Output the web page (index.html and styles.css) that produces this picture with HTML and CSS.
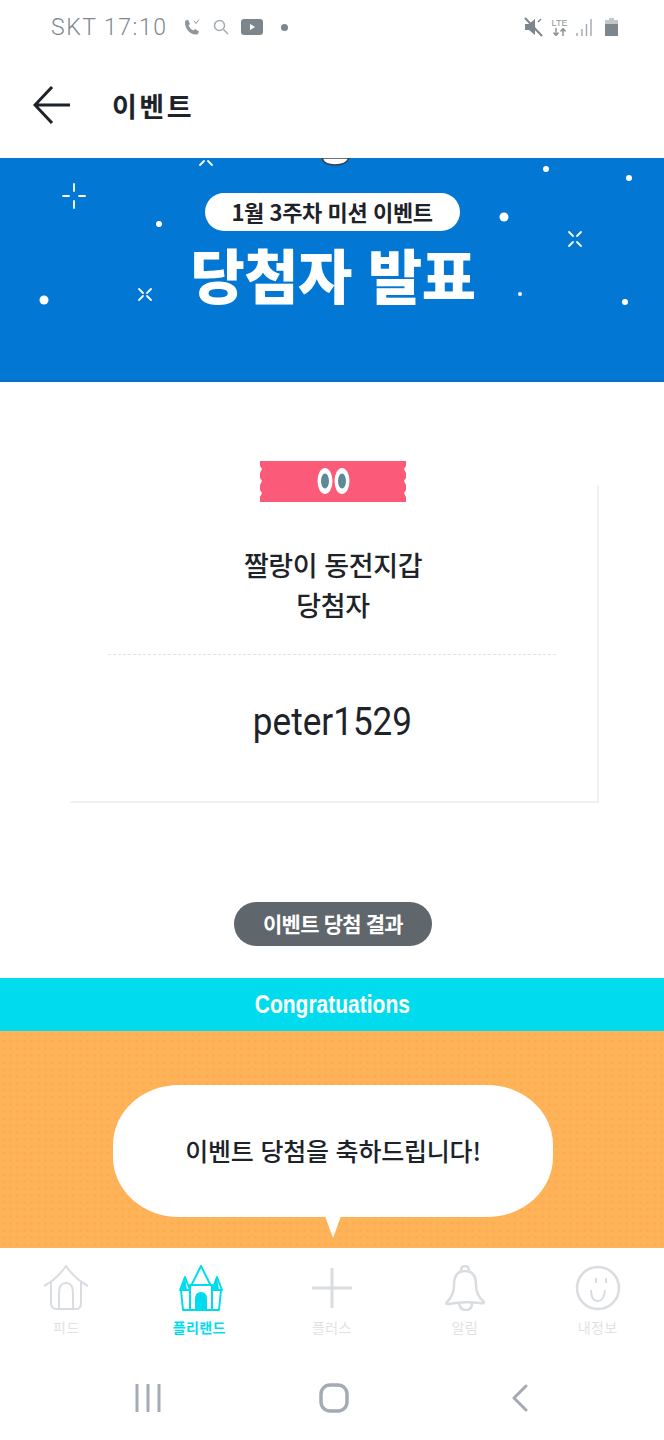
FILE: index.html
```html
<!DOCTYPE html>
<html lang="ko">
<head>
    <meta charset="UTF-8">
    <meta name="viewport" content="width=device-width, initial-scale=1.0">
    <title>이벤트</title>
    <link rel="stylesheet" href="styles.css">
</head>
<body>

    <!-- Status bar -->
    <div class="status-bar">
        <div class="status-left">
            <span class="status-text">SKT 17:10</span>
            <svg class="ic-phone" width="17" height="18" viewBox="0 0 17 18"><path d="M2 3 L5 1.500 L7 6 L5.500 7.500 Q7 11 10.500 12.500 L12 11 L16 13.500 L14.500 16.500 Q7 17 3.500 10.500 Q1.500 6.500 2 3Z" fill="#8d969c"/><path d="M11 3 L13 5.500 L16 1.500" fill="none" stroke="#8d969c" stroke-width="1"/></svg>
            <svg class="ic-search" width="16" height="16" viewBox="0 0 16 16"><circle cx="6.500" cy="6.500" r="5" fill="none" stroke="#a5acb1" stroke-width="1.500"/><path d="M10.500 10.500 L15 15" stroke="#a5acb1" stroke-width="1.500"/></svg>
            <svg class="ic-video" width="22" height="16" viewBox="0 0 22 16"><rect width="22" height="16" rx="3" fill="#7d868d"/><path d="M9 5 L14 8 L9 11Z" fill="#fff"/></svg>
            <span class="status-dot"></span>
        </div>
        <div class="status-right">
            <svg width="19" height="20" viewBox="0 0 19 20"><path d="M1 7 H5 L11 2 V18 L5 13 H1Z" fill="#7d868d"/><path d="M1 1 L18 19" stroke="#7d868d" stroke-width="2"/><path d="M14 5 L17 2" stroke="#7d868d" stroke-width="1.500"/></svg>
            <div class="lte">
                <span>LTE</span>
                <svg width="16" height="8" viewBox="0 0 16 8"><path d="M4 0 V7 M1.500 4.500 L4 7.500 L6.500 4.500 M11 8 V1 M8.500 3.500 L11 .5 L13.500 3.500" fill="none" stroke="#8d969c" stroke-width="1.500"/></svg>
            </div>
            <svg class="ic-signal" width="16" height="18" viewBox="0 0 16 18"><path d="M1 15 V18 M6 11 V18 M10.500 6 V18 M15 1 V18" stroke="#a5acb1" stroke-width="1.500"/></svg>
            <svg class="ic-battery" width="13" height="18" viewBox="0 0 13 18"><rect x="4" width="5" height="2" fill="#c2c7cb"/><rect y="2" width="13" height="5" fill="#c2c7cb"/><rect y="6" width="13" height="12" fill="#7d868d"/></svg>
        </div>
    </div>

    <!-- App bar -->
    <header class="app-bar">
        <svg width="38" height="38" viewBox="0 0 38 38"><path d="M37 19 H2 M19 1 L2 19 L19 37" fill="none" stroke="#1d2328" stroke-width="3"/></svg>
        <h1 class="app-title">이벤트</h1>
    </header>

    <!-- Banner -->
    <section class="banner">
        <svg class="banner-stars" width="664" height="224" viewBox="0 0 664 224">
            <g fill="none" stroke="#fff" stroke-width="1.800" stroke-linecap="round">
                <path d="M74 26 V33 M74 43 V50 M63 38 H69 M79 38 H85"/>
                <path d="M139 131 L143 135 M151 131 L147 135 M139 142 L143 138 M151 142 L147 138"/>
                <path d="M569 74 L573 78 M581 74 L577 78 M569 88 L573 84 M581 88 L577 84"/>
                <path d="M200 7 L204 3 M212 7 L208 3"/>
            </g>
            <path d="M322 0 Q324 7 335 7 Q346 7 349 0Z" fill="#fff" stroke="#3a4148" stroke-width="1.500"/>
            <g fill="#fff">
                <circle cx="159" cy="66" r="3"/>
                <circle cx="44" cy="142" r="4.500"/>
                <circle cx="546" cy="11" r="3"/>
                <circle cx="629" cy="20" r="3"/>
                <circle cx="504" cy="59" r="4.500"/>
                <circle cx="520" cy="136" r="2"/>
                <circle cx="625" cy="144" r="3"/>
            </g>
        </svg>
        <div class="banner-pill">1월 3주차 미션 이벤트</div>
        <div class="banner-title">당첨자 발표</div>
    </section>

    <main class="content">
        <!-- Winner card -->
        <div class="card">
            <svg class="ribbon" width="146" height="41" viewBox="0 0 146 41">
                <path d="M0 0 H146 V5 L144 8 L146 12 V17 L144 20 L146 24 V29 L144 32 L146 36 V41 H0 V36 L2 32 L0 29 V24 L2 20 L0 17 V12 L2 8 L0 5Z" fill="#fb5b78"/>
                <ellipse cx="65" cy="20" rx="7.500" ry="13" fill="#fff"/>
                <ellipse cx="82" cy="20" rx="7.500" ry="13" fill="#fff"/>
                <ellipse cx="65" cy="20" rx="4" ry="7.500" fill="#5d8a96"/>
                <ellipse cx="82" cy="20" rx="4" ry="7.500" fill="#5d8a96"/>
            </svg>
            <p class="card-title">짤랑이 동전지갑<br>당첨자</p>
            <div class="card-line"></div>
            <p class="card-name"><span>peter1529</span></p>
        </div>

        <div class="result-pill">이벤트 당첨 결과</div>
        <div class="congrats"><span>Congratuations</span></div>

        <div class="orange">
            <div class="bubble">이벤트 당첨을 축하드립니다!</div>
        </div>
    </main>

    <!-- Bottom tabs -->
    <nav class="tabs">
        <a class="tab">
            <svg width="46" height="46" viewBox="0 0 46 46"><g fill="none" stroke="#d9dce0" stroke-width="2" stroke-linejoin="round"><path d="M1 21 Q14 14 23 1 Q32 14 45 21"/><path d="M8 17 V38 Q8 44 14 44 H33 Q38 44 38 38 V17"/><path d="M16 44 V28 Q16 18 23 18 Q30 18 30 28 V44"/></g></svg>
            <span>피드</span>
        </a>
        <a class="tab active">
            <svg class="ic-castle" width="44" height="46" viewBox="0 0 44 46"><g fill="none" stroke="#00dcee" stroke-width="2" stroke-linejoin="round"><path d="M12 21 L22 1 L32 21"/><path d="M1 25 L6 12 L11 25Z"/><path d="M33 25 L38 12 L43 25Z"/><path d="M2 25 L4 45 H40 L42 25"/><path d="M11 25 V20 H33 V25"/><path d="M11 25 V45 M33 25 V45"/></g><path d="M16 45 V34 Q16 27 22 27 Q28 27 28 34 V45Z" fill="#00dcee"/><path d="M1 25 L6 12 L8 25Z M33 25 L38 12 L40 25Z" fill="#00dcee"/></svg>
            <span>플리랜드</span>
        </a>
        <a class="tab">
            <svg width="46" height="46" viewBox="0 0 46 46"><path d="M23 3 V43 M3 23 H43" fill="none" stroke="#d9dce0" stroke-width="3"/></svg>
            <span>플러스</span>
        </a>
        <a class="tab">
            <svg width="46" height="46" viewBox="0 0 46 46"><g fill="none" stroke="#d9dce0" stroke-width="2.500" stroke-linejoin="round"><path d="M19 6 Q19 1 23 1 Q27 1 27 6"/><path d="M5 37 Q12 30 12 20 Q12 6 23 6 Q34 6 34 20 Q34 30 42 37 Q42 39 38 38 Q20 36 7 39 Q3 39 5 37Z"/><path d="M17 38 Q18 45 24 45 Q30 45 30 38"/></g></svg>
            <span>알림</span>
        </a>
        <a class="tab">
            <svg width="46" height="46" viewBox="0 0 46 46"><g fill="none" stroke="#d9dce0" stroke-width="2.500"><circle cx="23" cy="23" r="21"/><path d="M16 25 Q16 36 23 36 Q29 36 30 25 M21 13 V18 M31 13 V18" stroke-width="2"/></g></svg>
            <span>내정보</span>
        </a>
    </nav>

    <!-- System nav -->
    <div class="sys-nav">
        <svg width="28" height="28" viewBox="0 0 28 28"><path d="M3 1 V27 M14 1 V27 M25 1 V27" stroke="#a4abb4" stroke-width="3" stroke-linecap="round"/></svg>
        <svg width="30" height="30" viewBox="0 0 30 30"><rect x="2" y="2" width="26" height="26" rx="9" fill="none" stroke="#a4abb4" stroke-width="3.500"/></svg>
        <svg width="18" height="28" viewBox="0 0 18 28"><path d="M15 2 L3 14 L15 26" fill="none" stroke="#a4abb4" stroke-width="3" stroke-linecap="round" stroke-linejoin="round"/></svg>
    </div>

</body>
</html>
```

FILE: styles.css
```css
* {
    box-sizing: border-box;
}

html, body {
    margin: 0;
    height: 1440px;
}

body {
    width: 664px;
    display: flex;
    flex-direction: column;
    overflow: hidden;
    background-color: #fff;
    color: #1d2328;
    font-family: "Noto Sans CJK KR", "Noto Sans", sans-serif;
}

/* Status bar */
.status-bar {
    height: 58px;
    flex: none;
    display: flex;
    justify-content: space-between;
    align-items: center;
    padding: 0 46px 4px 51px;
}

.status-left, .status-right {
    display: flex;
    align-items: center;
}

.status-text {
    font-family: Roboto, sans-serif;
    font-size: 23px;
    font-weight: 300;
    letter-spacing: 1.500px;
    color: #7f888e;
}

.ic-phone { margin-left: 16px; }
.ic-search { margin-left: 13px; }
.ic-video { margin-left: 12px; }

.status-dot {
    width: 7px;
    height: 7px;
    margin-left: 18px;
    border-radius: 50%;
    background-color: #7d868d;
}

.lte {
    width: 17px;
    margin-left: 8px;
    display: flex;
    flex-direction: column;
    align-items: center;
    font-family: "Liberation Sans", sans-serif;
    font-size: 9px;
    line-height: 10px;
    color: #8d969c;
}

.ic-signal { margin-left: 8px; }
.ic-battery { margin-left: 13px; }

/* App bar */
.app-bar {
    height: 100px;
    flex: none;
    display: flex;
    align-items: center;
    padding: 0 0 6px 33px;
}

.app-title {
    margin: 0 0 0 41px;
    font-size: 27px;
    font-weight: 700;
    letter-spacing: 2.500px;
}

/* Banner */
.banner {
    position: relative;
    height: 224px;
    flex: none;
    display: flex;
    flex-direction: column;
    align-items: center;
    padding-top: 35px;
    background-color: #0277d4;
    border-bottom: 2px solid #0570c6;
}

.banner-stars {
    position: absolute;
    top: 0;
    left: 0;
}

.banner-pill {
    width: 255px;
    height: 38px;
    border-radius: 19px;
    background-color: #fff;
    text-align: center;
    font-size: 22px;
    font-weight: 700;
    line-height: 37px;
    letter-spacing: -0.4px;
}

.banner-title {
    margin-top: 8px;
    margin-left: 2px;
    font-size: 59px;
    font-weight: 900;
    line-height: 70px;
    color: #fff;
    letter-spacing: -0.5px;
}

/* Content */
.content {
    flex: 1;
    display: flex;
    flex-direction: column;
    align-items: center;
}

.card {
    position: relative;
    width: 529px;
    height: 318px;
    margin-top: 103px;
    margin-left: 5px;
    padding-top: 60px;
    border-right: 2px solid #eef2f2;
    border-bottom: 2px solid #eef2f2;
    text-align: center;
}

.ribbon {
    position: absolute;
    top: -24px;
    left: 190px;
}

.card-title {
    margin: 0 1px 0 0;
    font-size: 27px;
    font-weight: 500;
    line-height: 40px;
    letter-spacing: -0.4px;
}

.card-line {
    width: 448px;
    margin: 29px 0 0 38px;
    border-top: 1px dashed #dfe3e3;
}

.card-name {
    margin: 42px 3px 0 0;
    font-family: Roboto, sans-serif;
    font-size: 39px;
    line-height: 50px;
}

.card-name span {
    display: inline-block;
    transform: scaleX(0.9);
}

.result-pill {
    width: 198px;
    height: 44px;
    margin-top: 99px;
    margin-left: 2px;
    border-radius: 22px;
    background-color: #5f666c;
    color: #fff;
    text-align: center;
    font-size: 21px;
    font-weight: 700;
    line-height: 43px;
    letter-spacing: -0.8px;
}

.congrats {
    width: 100%;
    height: 53px;
    flex: none;
    margin-top: 32px;
    background-color: #00dcee;
    color: #fff;
    text-align: center;
    font-family: "Liberation Sans", sans-serif;
    font-size: 25px;
    font-weight: 700;
    line-height: 52px;
}

.congrats span {
    display: inline-block;
    transform: scaleX(0.84);
}

.orange {
    width: 100%;
    flex: 1;
    display: flex;
    justify-content: center;
    padding-top: 54px;
    background-color: #ffb359;
    background-image: radial-gradient(#fcab4f 1px, transparent 1.500px);
    background-size: 7px 7px;
}

.bubble {
    position: relative;
    width: 440px;
    height: 132px;
    margin-left: 2px;
    border-radius: 66px / 60px;
    background-color: #fff;
    text-align: center;
    font-size: 25px;
    font-weight: 500;
    line-height: 131px;
    letter-spacing: -0.2px;
}

.bubble::after {
    content: "";
    position: absolute;
    top: 131px;
    left: 212px;
    border-style: solid;
    border-width: 22px 8px 0;
    border-color: #fff transparent transparent;
}

/* Bottom tabs */
.tabs {
    height: 97px;
    flex: none;
    display: grid;
    grid-template-columns: repeat(5, 1fr);
    padding-top: 17px;
    background-color: #fff;
}

.tab {
    display: flex;
    flex-direction: column;
    align-items: center;
    font-size: 14px;
    line-height: 18px;
    letter-spacing: 0.4px;
    color: #dfe2e5;
}

.tab span {
    margin-top: 7px;
}

.tab.active {
    color: #00dcee;
    font-weight: 700;
}

.ic-castle {
    margin-left: 4px;
}

/* System nav */
.sys-nav {
    height: 95px;
    flex: none;
    display: grid;
    grid-template-columns: repeat(3, 1fr);
    justify-items: center;
    align-items: center;
    padding: 11px 51px 0 55px;
}
```
